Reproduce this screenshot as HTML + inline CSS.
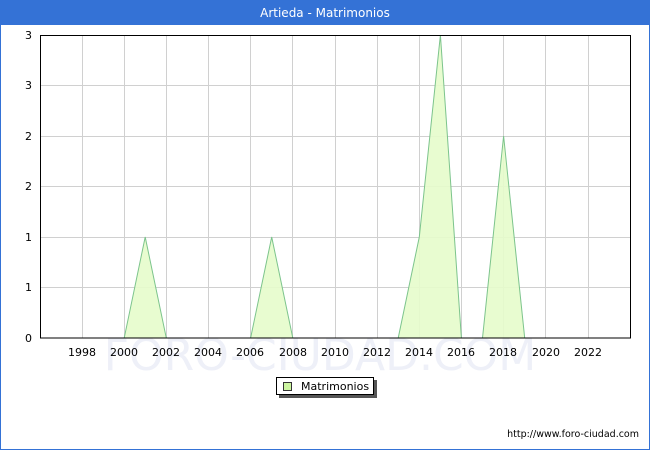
<!DOCTYPE html>
<html><head><meta charset="utf-8"><style>
body{margin:0;width:650px;height:450px;overflow:hidden;background:#fff;font-family:"DejaVu Sans","Liberation Sans",sans-serif}
</style></head><body>
<svg width="650" height="450" xmlns="http://www.w3.org/2000/svg" font-family="DejaVu Sans, Liberation Sans, sans-serif">
<rect x="0.5" y="0.5" width="649" height="449" fill="#fff" stroke="#3472d6" stroke-width="1"/>
<rect x="0" y="0" width="650" height="25" fill="#3472d6"/>
<text x="325" y="17" text-anchor="middle" fill="#fff" font-size="12">Artieda - Matrimonios</text>
<text x="320" y="370" text-anchor="middle" fill="#eef0f8" font-size="44">FORO-CIUDAD.COM</text>
<g stroke="#d0d0d0" stroke-width="1">
<line x1="40" y1="85.5" x2="630" y2="85.5"/><line x1="40" y1="136.5" x2="630" y2="136.5"/>
<line x1="40" y1="186.5" x2="630" y2="186.5"/><line x1="40" y1="237.5" x2="630" y2="237.5"/>
<line x1="40" y1="287.5" x2="630" y2="287.5"/>
<line x1="82.5" y1="35" x2="82.5" y2="338"/><line x1="124.5" y1="35" x2="124.5" y2="338"/>
<line x1="166.5" y1="35" x2="166.5" y2="338"/><line x1="208.5" y1="35" x2="208.5" y2="338"/>
<line x1="250.5" y1="35" x2="250.5" y2="338"/><line x1="292.5" y1="35" x2="292.5" y2="338"/>
<line x1="335.5" y1="35" x2="335.5" y2="338"/><line x1="377.5" y1="35" x2="377.5" y2="338"/>
<line x1="419.5" y1="35" x2="419.5" y2="338"/><line x1="461.5" y1="35" x2="461.5" y2="338"/>
<line x1="503.5" y1="35" x2="503.5" y2="338"/><line x1="545.5" y1="35" x2="545.5" y2="338"/>
<line x1="588.5" y1="35" x2="588.5" y2="338"/>
</g>
<g fill="#e6fccb" fill-opacity="0.9" stroke="#7cc48c" stroke-width="1">
<polygon points="124.2,338 145.2,237 166.3,338"/>
<polygon points="250.6,338 271.7,237 292.8,338"/>
<polygon points="398.2,338 419.3,237 440.4,35 461.4,338"/>
<polygon points="482.5,338 503.6,136 524.7,338"/>
</g>
<rect x="40.5" y="35.5" width="590" height="302.5" fill="none" stroke="#000" stroke-width="1"/>
<g font-size="11" fill="#000" text-anchor="end">
<text x="32" y="39">3</text><text x="32" y="89">3</text><text x="32" y="140">2</text>
<text x="32" y="190">2</text><text x="32" y="241">1</text><text x="32" y="291">1</text><text x="32" y="342">0</text>
</g>
<g font-size="11" fill="#000" text-anchor="middle">
<text x="82" y="356">1998</text><text x="124" y="356">2000</text><text x="166" y="356">2002</text>
<text x="208" y="356">2004</text><text x="250" y="356">2006</text><text x="293" y="356">2008</text>
<text x="335" y="356">2010</text><text x="377" y="356">2012</text><text x="419" y="356">2014</text>
<text x="461" y="356">2016</text><text x="503" y="356">2018</text><text x="546" y="356">2020</text>
<text x="588" y="356">2022</text>
</g>
<rect x="279" y="380" width="98" height="18" fill="#555"/>
<rect x="276.5" y="377.5" width="97" height="17" fill="#fff" stroke="#000" stroke-width="1"/>
<rect x="283.5" y="382.5" width="8" height="8" fill="#ccf5a0" stroke="#333" stroke-width="1"/>
<text x="301" y="390" font-size="11" fill="#000">Matrimonios</text>
<text x="639" y="437" font-size="9.5" fill="#000" text-anchor="end">http://www.foro-ciudad.com</text>
</svg>
</body></html>
